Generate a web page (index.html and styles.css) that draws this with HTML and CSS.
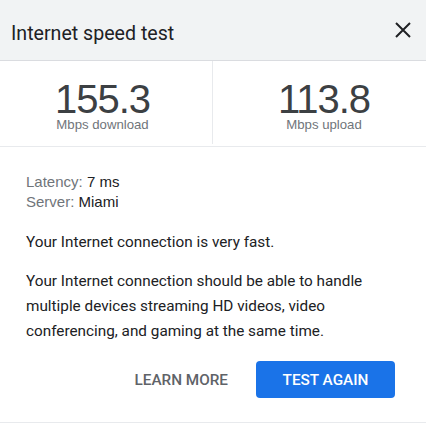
FILE: index.html
```html
<!DOCTYPE html>
<html>
<head>
<meta charset="utf-8">
<link rel="stylesheet" href="styles.css">
</head>
<body>
<div class="dialog">
  <div class="header">
    <div class="title">Internet speed test</div>
    <svg class="close" width="16" height="16" viewBox="0 0 16 16"><path d="M1 1L15 15M15 1L1 15" stroke="#202124" stroke-width="2" fill="none"/></svg>
  </div>
  <div class="stats">
    <div class="stat left">
      <div class="num">155.3</div>
      <div class="unit">Mbps download</div>
    </div>
    <div class="stat right">
      <div class="num">113.8</div>
      <div class="unit">Mbps upload</div>
    </div>
  </div>
  <div class="details">
    <div class="meta"><span class="label">Latency:</span> 7 ms</div>
    <div class="meta"><span class="label">Server:</span> Miami</div>
    <p class="msg first">Your Internet connection is very fast.</p>
    <p class="msg">Your Internet connection should be able to handle multiple devices streaming HD videos, video conferencing, and gaming at the same time.</p>
    <div class="actions">
      <button class="btn text">LEARN MORE</button>
      <button class="btn primary">TEST AGAIN</button>
    </div>
  </div>
</div>
</body>
</html>
```

FILE: styles.css
```css
html, body {
  margin: 0;
  padding: 0;
  background: #fff;
}
.dialog {
  width: 426px;
  height: 422px;
  border-bottom: 1px solid #e8eaed;
  font-family: Roboto, "Liberation Sans", sans-serif;
  color: #202124;
}
.header {
  height: 60px;
  background: #f1f3f4;
  border-bottom: 1px solid #dadce0;
  display: flex;
  align-items: center;
  justify-content: space-between;
  padding: 0 15px 0 11px;
}
.title {
  font-size: 19.6px;
  padding-top: 6px;
  color: #202124;
}
.stats {
  display: grid;
  grid-template-columns: 213px 1fr;
  height: 85px;
  border-bottom: 1px solid #e8eaed;
}
.stat {
  display: flex;
  flex-direction: column;
  align-items: center;
  padding-top: 20px;
  font-family: "Liberation Sans", Arial, sans-serif;
}
.stat.left {
  border-right: 1px solid #e8eaed;
  padding-right: 7px;
  height: 63px;
}
.stat.right {
  padding-left: 9px;
}
.num {
  font-size: 40px;
  line-height: 36px;
  letter-spacing: -1px;
  color: #3c4043;
}
.unit {
  font-size: 13.2px;
  line-height: 16px;
  color: #70757a;
}
.details {
  padding: 25px 31px 0 26px;
}
.meta {
  font-family: "Liberation Sans", Arial, sans-serif;
  font-size: 15px;
  line-height: 20px;
  color: #202124;
}
.label {
  color: #70757a;
}
.msg {
  margin: 14px 0 0;
  font-size: 15.3px;
  line-height: 25px;
  color: #202124;
}
.msg.first {
  margin-top: 18px;
}
.actions {
  display: flex;
  justify-content: flex-end;
  align-items: center;
  gap: 28px;
  margin-top: 17px;
}
.btn {
  font-family: Roboto, sans-serif;
  font-weight: 500;
  font-size: 15.3px;
  border: none;
  background: none;
  height: 37px;
  border-radius: 4px;
  padding: 0;
}
.btn.text {
  color: #5f6368;
}
.btn.primary {
  background: #1a73e8;
  color: #fff;
  width: 139px;
}
```
